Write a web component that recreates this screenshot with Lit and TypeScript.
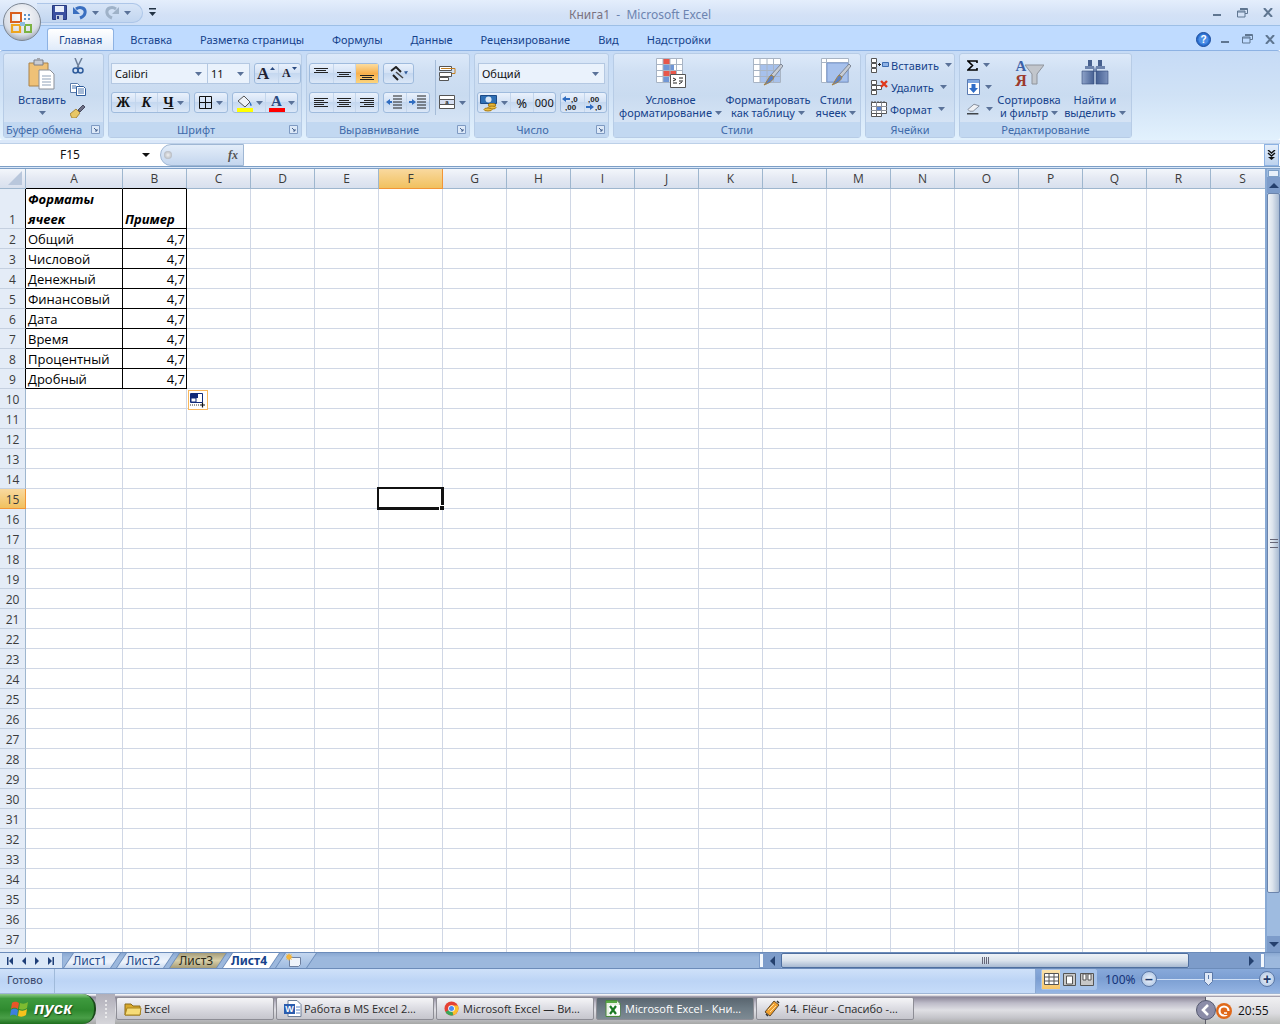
import { LitElement, html, css } from 'lit';
import { customElement } from 'lit/decorators.js';

const COLS = 'ABCDEFGHIJKLMNOPQRS'.split('');
const DATA: [string, string][] = [
  ['Общий', '4,7'],
  ['Числовой', '4,7'],
  ['Денежный', '4,7'],
  ['Финансовый', '4,7'],
  ['Дата', '4,7'],
  ['Время', '4,7'],
  ['Процентный', '4,7'],
  ['Дробный', '4,7'],
];

const caret = html`<svg class="caret" width="7" height="4" viewBox="0 0 7 4"><path d="M0 0h7L3.500 4z" fill="#5a7299"/></svg>`;
const launcher = html`<svg class="launcher" width="9" height="9" viewBox="0 0 9 9"><path d="M.5.500h8v8h-8z" fill="#dce8f7" stroke="#7f9ac2"/><path d="M3 3l3 3M6 4v2H4" fill="none" stroke="#46628f"/></svg>`;

// horizontal text-line glyphs for the alignment buttons
const lineIcon = (rows: [number, number, number][]) => html`<svg width="16" height="14" viewBox="0 0 16 14">
  <path d=${rows.map(([y, a, b]) => `M${a} ${y + 0.5}H${b}`).join('')} stroke="#222" fill="none"/>
</svg>`;

const icons = {
  office: html`<svg width="40" height="40" viewBox="0 0 40 40">
    <defs><radialGradient id="orb" cx=".5" cy=".35" r=".7"><stop offset="0" stop-color="#fff"/><stop offset=".7" stop-color="#d8dde6"/><stop offset="1" stop-color="#8f98a6"/></radialGradient></defs>
    <circle cx="20" cy="20" r="18.500" fill="url(#orb)" stroke="#7d8794"/>
    <path d="M9 11h10v9H9z" fill="none" stroke="#d9601f" stroke-width="2"/>
    <path d="M10 23h8v7h-8z" fill="none" stroke="#eda51f" stroke-width="2.200"/>
    <path d="M23 23h6v7h-6z" fill="none" stroke="#7cb342" stroke-width="2"/>
    <path d="M22 12h2v2h-2zM26 12h2v2h-2zM22 16h2v2h-2zM26 16h2v2h-2z" fill="#5b93c7"/>
    <path d="M18 20h5v4h-5z" fill="#8fbce0"/>
  </svg>`,
  save: html`<svg width="15" height="15" viewBox="0 0 15 15"><path d="M.5.500h14v14h-14z" fill="#3a50a0" stroke="#283a80"/><path d="M3 1h9v6H3z" fill="#e8eefa"/><path d="M4 10h7v5H4z" fill="#c3cde0"/><path d="M5 11h2v3H5z" fill="#2d3f85"/></svg>`,
  undo: html`<svg width="14" height="14" viewBox="0 0 14 14"><path d="M3 3c4-3 10-1 9 4-.4 2.600-2.500 4-5 5" fill="none" stroke="#3a6fc0" stroke-width="3"/><path d="M0 1v7h7z" fill="#3a6fc0"/></svg>`,
  redo: html`<svg width="14" height="14" viewBox="0 0 14 14"><path d="M11 3C7 0 1 2 2 7c.4 2.600 2.500 4 5 5" fill="none" stroke="#9fb2c8" stroke-width="3"/><path d="M14 1v7H7z" fill="#9fb2c8"/></svg>`,
  qat: html`<svg width="7" height="9" viewBox="0 0 7 9"><path d="M0 0h7v1.500H0z" fill="#234"/><path d="M0 4h7L3.500 8z" fill="#234"/></svg>`,
  paste: html`<svg width="28" height="32" viewBox="0 0 28 32">
    <path d="M1 5h19v23H1z" fill="#efc177" stroke="#a9824a"/><path d="M6 2h9v5H6z" fill="#c9ccd3" stroke="#7d7f87"/><path d="M9 0h3v3H9z" fill="#a2a6ae"/>
    <path d="M11 12h11l4 4v15H11z" fill="#fff" stroke="#8a8f98"/><path d="M14 18h9M14 21h9M14 24h9M14 27h9" stroke="#8fa1b8"/>
  </svg>`,
  cut: html`<svg width="12" height="16" viewBox="0 0 12 16"><path d="M3 0l4 10M10 0L5 10" stroke="#6d7f99" stroke-width="1.500" fill="none"/><circle cx="3.500" cy="12.500" r="2.500" fill="none" stroke="#2f5c9c" stroke-width="1.500"/><circle cx="8.500" cy="12.500" r="2.500" fill="none" stroke="#2f5c9c" stroke-width="1.500"/></svg>`,
  copy: html`<svg width="16" height="13" viewBox="0 0 16 13"><path d="M.5.500h7l2 2v7h-9z" fill="#fff" stroke="#5b7cab"/><path d="M6.500 3.500h7l2 2v7h-9z" fill="#fff" stroke="#2f5c9c"/><path d="M2 3h4M2 5h4M8 6h6M8 8h6M8 10h6" stroke="#4a76b0"/></svg>`,
  painter: html`<svg width="16" height="14" viewBox="0 0 16 14"><path d="M0 10l6-5 4 4-4 5H2z" fill="#e8c766" stroke="#a8893d"/><path d="M8 6l5-5 2 2-5 5z" fill="#6d6f85" stroke="#4a4c60"/></svg>`,
  borders: html`<svg width="14" height="14" viewBox="0 0 14 14"><path d="M.5.500h12v12H.500zM6.500.500v12M.500 6.500h12" fill="none" stroke="#111"/></svg>`,
  fill: html`<svg width="17" height="18" viewBox="0 0 17 18"><path d="M2 7l6-5 6 6-5 5z" fill="#eef2f8" stroke="#555"/><path d="M14 8c2 2 2 4 1 4s-1.500-2-1-4z" fill="#2f6cc0"/><path d="M1 14h16v4H1z" fill="#ff0"/></svg>`,
  fontColor: html`<svg width="17" height="18" viewBox="0 0 17 18"><text x="8.500" y="12" font-family="Liberation Serif" font-weight="700" font-size="15" text-anchor="middle" fill="#2a4a80">A</text><path d="M1 14h16v4H1z" fill="#f00"/></svg>`,
  orient: html`<svg width="19" height="15" viewBox="0 0 19 15"><path d="M2 5l5-4 5 5M4 9l5 5" fill="none" stroke="#222" stroke-width="2"/><path d="M7 6l7 6" stroke="#444" stroke-width="1.500"/><path d="M19 5l-4 .5 2 3z" fill="#2f5c9c"/></svg>`,
  wrap: html`<svg width="17" height="15" viewBox="0 0 17 15"><path d="M.5.500h12v4H.500zM.5 6.500h12v4H.500z" fill="#fff" stroke="#555"/><path d="M2 2.500h14v5h-3" fill="none" stroke="#c27f22"/><path d="M.5 11.500h9v3h-9z" fill="#fff" stroke="#555"/></svg>`,
  merge: html`<svg width="17" height="15" viewBox="0 0 17 15"><path d="M.5.500h15v13H.500z" fill="#fff" stroke="#555"/><path d="M.5 4.500h15v5H.500z" fill="#d5def0" stroke="#555"/><text x="8" y="9" font-size="6" font-family="Liberation Sans" font-weight="700" text-anchor="middle" fill="#222">a</text></svg>`,
  indentL: html`<svg width="17" height="15" viewBox="0 0 17 15"><path d="M7 1h9M7 4h9M7 7h9M7 10h9M7 13h9" stroke="#222"/><path d="M0 7l4-3v2h2v2H4v2z" fill="#2f6cc0"/></svg>`,
  indentR: html`<svg width="17" height="15" viewBox="0 0 17 15"><path d="M8 1h9M8 4h9M8 7h9M8 10h9M8 13h9" stroke="#222"/><path d="M7 7L3 4v2H0v2h3v2z" fill="#2f6cc0"/></svg>`,
  money: html`<svg width="18" height="18" viewBox="0 0 18 18"><path d="M.5 1.500h16v8H.500z" fill="#2f6fb5" stroke="#1c4a86"/><circle cx="8.500" cy="5.500" r="3" fill="#d8e6f6"/><ellipse cx="12" cy="11" rx="4" ry="1.500" fill="#f0c040" stroke="#a67a15"/><ellipse cx="12" cy="13.500" rx="4" ry="1.500" fill="#f0c040" stroke="#a67a15"/><ellipse cx="8" cy="15.500" rx="4" ry="1.500" fill="#f0c040" stroke="#a67a15"/></svg>`,
  decMore: html`<svg width="20" height="16" viewBox="0 0 20 16"><path d="M0 4l4-3v2h4v2H4v2z" fill="#2f6cc0"/><text x="9" y="7" font-size="8" font-family="Liberation Sans" font-weight="700" fill="#222">,0</text><text x="3" y="15" font-size="8" font-family="Liberation Sans" font-weight="700" fill="#222">,00</text></svg>`,
  decLess: html`<svg width="20" height="16" viewBox="0 0 20 16"><text x="3" y="7" font-size="8" font-family="Liberation Sans" font-weight="700" fill="#222">,00</text><path d="M9 12l-4-3v2H1v2h4v2z" fill="#2f6cc0"/><text x="10" y="15" font-size="8" font-family="Liberation Sans" font-weight="700" fill="#222">,0</text></svg>`,
  condFmt: html`<svg width="30" height="30" viewBox="0 0 30 30">
    <path d="M.5.500h26v24H.500z" fill="#fff" stroke="#a8b4c4"/>
    <path d="M7 1h7v5H7z" fill="#e8574a"/><path d="M7 7h11v5H7z" fill="#7097d6"/><path d="M7 13h13v5H7z" fill="#e8574a"/><path d="M7 19h6v5H7z" fill="#7097d6"/>
    <path d="M0 6.500h26M0 12.500h26M0 18.500h26M7 0v24M14 0v24M20.500 0v24" stroke="#a8b4c4"/>
    <path d="M14.500 16.500h15v13h-15z" fill="#fff" stroke="#555"/><path d="M17 20l3 1.500-3 1.500M17 25h4M23 20h4M23 23h4M23 26l3-2" fill="none" stroke="#222"/>
  </svg>`,
  tableFmt: html`<svg width="30" height="30" viewBox="0 0 30 30">
    <path d="M.5.500h27v24H.500z" fill="#fff" stroke="#a8b4c4"/><path d="M7 7h20v17H7z" fill="#a7c1ec"/>
    <path d="M0 6.500h27M0 12.500h27M0 18.500h27M7 0v24M14 0v24M20.500 0v24" stroke="#a8b4c4"/>
    <path d="M28 6l2 2-9 11-3-2z" fill="#c7ccd4" stroke="#7d8694"/><path d="M18 17l3 2c-1 4-5 6-10 8 3-3 4-7 7-10z" fill="#5b80c4" stroke="#a8823f"/>
  </svg>`,
  cellFmt: html`<svg width="30" height="30" viewBox="0 0 30 30">
    <path d="M.5.500h27v24H.500z" fill="#fff" stroke="#a8b4c4"/><path d="M0 4.500h27M5.500 0v24" stroke="#a8b4c4"/><path d="M6 5h21v19H6z" fill="#a7c1ec" stroke="#7d9ad0"/>
    <path d="M28 6l2 2-9 11-3-2z" fill="#c7ccd4" stroke="#7d8694"/><path d="M18 17l3 2c-1 4-5 6-10 8 3-3 4-7 7-10z" fill="#5b80c4" stroke="#a8823f"/>
  </svg>`,
  cellIns: html`<svg width="18" height="15" viewBox="0 0 18 15"><path d="M.5.500h5v4h-5zM.5 5.500h5v4h-5zM.5 10.500h5v4h-5z" fill="#fff" stroke="#555"/><path d="M11.500 4.500h6v4h-6z" fill="#8fb3e6" stroke="#3d6cb0"/><path d="M7 6.500h3M8.500 5v3" stroke="#222"/></svg>`,
  cellDel: html`<svg width="18" height="15" viewBox="0 0 18 15"><path d="M.5.500h5v4h-5zM.5 5.500h5v4h-5zM.5 10.500h5v4h-5zM5.500 5.500h5v4h-5z" fill="#fff" stroke="#555"/><path d="M10 1l6 6M16 1l-6 6" stroke="#e0391c" stroke-width="2.400"/></svg>`,
  cellFormat: html`<svg width="17" height="16" viewBox="0 0 17 16"><path d="M.5 1.500h15v11H.500z" fill="#fff" stroke="#555"/><path d="M0 5.500h16M0 9.500h16M5.500 1v12M10.500 1v12" stroke="#8a8f98"/><path d="M6 6h4v3H6z" fill="#5a86d6"/><path d="M1 0v2M4 0v2M7 0v2M10 0v2M13 0v2" stroke="#555"/><path d="M.5 12.500h5v3h-5zM5.500 12.500h5v3h-5z" fill="#fff" stroke="#555"/></svg>`,
  sigma: html`<svg width="11" height="11" viewBox="0 0 11 11"><path d="M10 3V1H1l4.500 4.500L1 10h9V8" fill="none" stroke="#000" stroke-width="1.600"/></svg>`,
  fillDown: html`<svg width="13" height="16" viewBox="0 0 13 16"><path d="M.5.500h12v15H.500z" fill="#fff" stroke="#5a7ab0"/><path d="M1 1h11v3H1z" fill="#7ea6e0"/><path d="M4.500 5h4v4H11l-4.500 5L2 9h2.500z" fill="#2e6cc8"/></svg>`,
  eraser: html`<svg width="14" height="12" viewBox="0 0 16 13"><path d="M1 7l7-6 6 2-7 6H3z" fill="#eef0f4" stroke="#7c8594"/><path d="M0 12h13" stroke="#111" stroke-width="1.300"/></svg>`,
  sort: html`<svg width="30" height="30" viewBox="0 0 30 30">
    <path d="M11 7h19l-7 9v10h-5V16z" fill="#c2c6cc" stroke="#8f949c"/>
    <text x="7" y="13" font-family="Liberation Serif" font-weight="700" font-size="15" text-anchor="middle" fill="#3d62a8">А</text>
    <text x="7" y="28" font-family="Liberation Serif" font-weight="700" font-size="16" text-anchor="middle" fill="#9c3a2e">Я</text>
  </svg>`,
  find: html`<svg width="28" height="30" viewBox="0 -1 28 30">
    <defs><linearGradient id="bin" x1="0" x2="1"><stop offset="0" stop-color="#8ea3c9"/><stop offset=".5" stop-color="#3f5a8e"/><stop offset="1" stop-color="#7d93bd"/></linearGradient></defs>
    <path d="M7 1h4v6H7zM17 1h4v6h-4z" fill="#46608f"/><path d="M4 7h9l1 4 1-4h9v3h-8v3h-4v-3H4z" fill="#6d84ad"/>
    <path d="M1 12h12v13H1zM15 12h12v13H15z" fill="url(#bin)" stroke="#334a78" stroke-width=".6"/>
  </svg>`,
  help: html`<svg width="15" height="15" viewBox="0 0 15 15"><circle cx="7.500" cy="7.500" r="7" fill="#2b6fd0" stroke="#1a4c9c"/><circle cx="7.500" cy="7.500" r="5" fill="#4c8fe6"/><text x="7.500" y="11" font-family="Liberation Sans" font-weight="700" font-size="10" text-anchor="middle" fill="#fff">?</text></svg>`,
  min: html`<svg width="9" height="9" viewBox="0 0 9 9"><path d="M0 6h8v2H0z" fill="#5f7691"/></svg>`,
  restore: html`<svg width="11" height="10" viewBox="0 0 11 10"><path d="M3 .5h7.500v5H8M.5 3h7.500v6H.5z" fill="none" stroke="#5f7691"/><path d="M3 1h7v1H3zM1 3.500h7v1H1z" fill="#5f7691"/></svg>`,
  close: html`<svg width="10" height="9" viewBox="0 0 10 9"><path d="M1 0l8 9M9 0L1 9" stroke="#5f7691" stroke-width="2"/></svg>`,
  fxExpand: html`<svg width="9" height="10" viewBox="0 0 9 10"><path d="M1 0l3.500 3L8 0M1 3l3.500 3L8 3" fill="none" stroke="#111" stroke-width="1.400"/><path d="M1 7h7L4.500 10z" fill="#111"/></svg>`,
  smart: html`<svg width="16" height="15" viewBox="0 0 16 15"><path d="M.5.500h12v9H.500z" fill="#fff" stroke="#112a78"/><path d="M1 1h7v4H1z" fill="#112a78"/><path d="M1 5h5v4H1z" fill="none" stroke="#112a78"/><path d="M0 12h10" stroke="#333" stroke-dasharray="1 1"/><path d="M10 12h5M12.500 9.500v5" stroke="#111" stroke-width="1.200"/></svg>`,
  flag: html`<svg width="20" height="19" viewBox="0 0 20 19"><path d="M2 3c3-2 5-1 7 0l-1 6C6 8 4 7 1 9z" fill="#e8552a"/><path d="M10 3c3 1 5 1 8-1l-1 6c-3 2-5 2-8 1z" fill="#7dbb30"/><path d="M1 10c3-2 5-1 7 0l-1 6c-2-1-4-2-7 0z" fill="#3d7fe0"/><path d="M9 10c3 1 5 1 8-1l-1 6c-3 2-5 2-8 1z" fill="#f6c21c"/></svg>`,
  folder: html`<svg width="18" height="15" viewBox="0 0 18 15"><path d="M1 3h6l2 2h7v9H1z" fill="#d9a92c" stroke="#8a6a18"/><path d="M1 14l2-7h14l-1 7z" fill="#f6dc78" stroke="#a8841f"/></svg>`,
  word: html`<svg width="18" height="17" viewBox="0 0 18 17"><path d="M4 .5h9l4 4v12H4z" fill="#fff" stroke="#6e7f98"/><path d="M0 4h11v10H0z" fill="#2a5cae"/><text x="5.500" y="12" font-family="Liberation Sans" font-weight="700" font-size="9" text-anchor="middle" fill="#fff">W</text><path d="M12 7h4M12 10h4M12 13h4" stroke="#5e86c6"/></svg>`,
  chrome: html`<svg width="17" height="15" viewBox="0 0 17 15"><circle cx="7.500" cy="7.500" r="7" fill="#e44134"/><path d="M7.500 7.500L1.500 11a7 7 0 0 0 6 3.500 7 7 0 0 0 2-.3z" fill="#3aa757"/><path d="M7.500 4.500h6.300a7 7 0 0 1-4.300 9.700L7.500 7.500z" fill="#fbc02d"/><circle cx="7.500" cy="7.500" r="3.300" fill="#fff"/><circle cx="7.500" cy="7.500" r="2.500" fill="#4b8bf5"/></svg>`,
  excel: html`<svg width="19" height="17" viewBox="0 0 19 17"><path d="M2 .5h11l3 3v13H2z" fill="#e8f0e4" stroke="#4a8a3c"/><path d="M2 1h11v2H2z" fill="#57a845"/><path d="M5 5h11v10H5z" fill="#fff"/><path d="M6 6l6 8M12 6l-6 8" stroke="#1c7a24" stroke-width="2.200"/></svg>`,
  winamp: html`<svg width="18" height="17" viewBox="0 0 18 17"><path d="M10 1l5 4L6 16l-5-4z" fill="#f0a030" stroke="#60482a"/><path d="M4 10l6-6M6 12l6-6" stroke="#fbe0a8"/><path d="M2 14l2 2M13 1l2 2" stroke="#333" stroke-width="1.500"/></svg>`,
  trayBack: html`<svg width="20" height="20" viewBox="0 0 20 20"><circle cx="10" cy="10" r="9.500" fill="#8b8ca8" stroke="#555a70"/><path d="M12 5l-5 5 5 5" fill="none" stroke="#fff" stroke-width="2.600"/></svg>`,
  trayApp: html`<svg width="16" height="16" viewBox="0 0 16 16"><circle cx="8" cy="8" r="8" fill="#e0691a"/><circle cx="8" cy="8" r="4.500" fill="none" stroke="#fff" stroke-width="2.200"/><path d="M8 8h6v4H8z" fill="#e0691a"/><path d="M8 10h3" stroke="#fff" stroke-width="1.500"/></svg>`,
  navFirst: html`<svg width="6" height="8" viewBox="0 0 6 8"><path d="M0 0h1.500v8H0zM6 0v8L2 4z" fill="#1f3f78"/></svg>`,
  navPrev: html`<svg width="4" height="8" viewBox="0 0 4 8"><path d="M4 0v8L0 4z" fill="#1f3f78"/></svg>`,
  navNext: html`<svg width="4" height="8" viewBox="0 0 4 8"><path d="M0 0v8l4-4z" fill="#1f3f78"/></svg>`,
  navLast: html`<svg width="6" height="8" viewBox="0 0 6 8"><path d="M0 0v8l4-4zM4.500 0H6v8H4.500z" fill="#1f3f78"/></svg>`,
  newSheet: html`<svg width="16" height="14" viewBox="0 0 16 14"><path d="M3.500 4.500h11v7l-2 2h-9z" fill="#eef3fa" stroke="#6e80a0"/><path d="M3 0l1 2 2-1-1 2 2 1-2 1 1 2-2-1-1 2-1-2-2 1 1-2-2-1 2-1-1-2 2 1z" fill="#f2b53c"/></svg>`,
  viewNormal: html`<svg width="15" height="12" viewBox="0 0 15 12"><path d="M.5.500h14v11H.500z" fill="#fff" stroke="#555"/><path d="M0 4h15M0 8h15M5 0v12M10 0v12" stroke="#555"/></svg>`,
  viewLayout: html`<svg width="13" height="13" viewBox="0 0 13 13"><path d="M.5.500h12v12H.500z" fill="#c8c8c8" stroke="#555"/><path d="M3.500 3h6v8h-6z" fill="#fff" stroke="#555"/></svg>`,
  viewBreak: html`<svg width="14" height="13" viewBox="0 0 14 13"><path d="M.5.500h13v12H.500z" fill="#c8c8c8" stroke="#555"/><path d="M3 1h3v6H3zM8 1h3v6H8z" fill="#fff" stroke="#555"/></svg>`,
  zoomThumb: html`<svg width="9" height="14" viewBox="0 0 9 14"><path d="M.5.500h8v9l-4 4-4-4z" fill="#dfe8f6" stroke="#5a78a8"/><path d="M4.500 3v4" stroke="#5a78a8"/></svg>`,
};

@customElement('app-root')
export class AppRoot extends LitElement {
  static styles = css`
    :host {
      display: block;
      width: 1280px;
      height: 1024px;
      overflow: hidden;
      font-family: 'Noto Sans', sans-serif;
      font-size: 11px;
      color: #15428b;
    }
    svg { display: block; flex: none; }
    .app { position: relative; display: flex; flex-direction: column; height: 1024px; }

    /* title bar */
    .titlebar {
      height: 26px;
      flex: none;
      display: flex;
      align-items: center;
      background: linear-gradient(#e4eefc, #d3e1f6 60%, #cfe0f7);
      border-bottom: 1px solid #9dbfe6;
      box-sizing: border-box;
    }
    .orb { position: absolute; left: 2px; top: 2px; z-index: 2; }
    .qat {
      margin-left: 37px;
      width: 106px;
      height: 20px;
      box-sizing: border-box;
      display: flex;
      align-items: center;
      padding-left: 15px;
      border: 1px solid #adc6e8;
      border-left: none;
      border-radius: 0 11px 11px 0;
      background: linear-gradient(#d8e5f7, #c2d6f0);
    }
    .qat .gap { width: 6px; }
    .qat .caret { margin-left: 5px; }
    .qat-more { margin-left: 6px; }
    .title { flex: 1; padding: 3px 0 0 413px; box-sizing: border-box; font-size: 12px; color: #6d84b0; white-space: pre; }
    .title span { color: #7a7280; }
    .winbtns { display: flex; align-items: center; gap: 15px; padding-right: 7px; }
    .winbtns.app-ctl { gap: 12px; padding-right: 5px; }
    .winbtns.app-ctl svg:first-child { margin-right: -2px; }

    /* tabs */
    .tabrow {
      height: 24px;
      flex: none;
      display: flex;
      align-items: flex-end;
      background: #bfdbff;
      padding-left: 47px;
      gap: 4px;
    }
    .tab {
      height: 22px;
      display: flex;
      align-items: center;
      padding: 0 12px;
      box-sizing: border-box;
      color: #15428b;
      white-space: nowrap;
    }
    .tab.on {
      padding: 0 11px;
      background: linear-gradient(#fff, #e0ebfa);
      border: 1px solid #8db2e3;
      border-bottom: none;
      border-radius: 3px 3px 0 0;
    }
    .tabrow .winbtns { margin-left: auto; height: 22px; }

    /* ribbon */
    .ribbon {
      height: 90px;
      flex: none;
      box-sizing: border-box;
      display: flex;
      gap: 4px;
      padding: 2px 3px 0;
      background: linear-gradient(#c6dbf6, #d0e2f6 50%, #e2f1fd);
      border-top: 1px solid #8db2e3;
      border-radius: 3px;
    }
    .group {
      height: 85px;
      box-sizing: border-box;
      border: 1px solid #b7cce6;
      border-radius: 3px;
      display: flex;
      flex-direction: column;
      background: linear-gradient(#dce9f9, #cfdff3 22%, #c9dbf0 50%, #dce8f7);
      flex: none;
    }
    .g-clip { width: 101px; }
    .g-font { width: 194px; }
    .g-align { width: 164px; }
    .g-num { width: 135px; }
    .g-style { width: 248px; }
    .g-cells { width: 90px; }
    .g-edit { width: 173px; }
    .body { height: 68px; box-sizing: border-box; display: flex; }
    .cap {
      height: 15px;
      box-sizing: border-box;
      background: #c2d8f1;
      display: flex;
      align-items: center;
      justify-content: center;
      color: #3e6aaa;
      position: relative;
      line-height: 15px;
      white-space: nowrap;
    }
    .cap.lp { padding-right: 18px; }
    .cap.left { justify-content: flex-start; padding-left: 2px; }
    .launcher { position: absolute; right: 3px; top: 3px; }

    .clip-big { width: 76px; display: flex; flex-direction: column; align-items: center; padding-top: 4px; box-sizing: border-box; flex: none; }
    .clip-big .label { margin-top: 3px; line-height: 14px; }
    .clip-big .caret { margin-top: 4px; }
    .clip-small { display: flex; flex-direction: column; align-items: center; justify-content: space-between; padding: 4px 0 2px; height: 66px; width: 20px; box-sizing: border-box; margin-left: -12px; }

    .rows { display: flex; flex-direction: column; gap: 8px; padding: 9px 0 0 2px; }
    .row { display: flex; gap: 4px; height: 21px; }
    .combo {
      box-sizing: border-box;
      height: 21px;
      display: flex;
      align-items: center;
      justify-content: space-between;
      padding: 0 5px 0 3px;
      background: #eaf2fc;
      border: 1px solid #b4c8e2;
      color: #111;
    }
    .c-font { width: 97px; }
    .c-size { width: 43px; margin-left: -5px; }
    .c-num { width: 127px; margin-left: 1px; }
    .btns {
      display: flex;
      align-items: stretch;
      height: 21px;
      box-sizing: border-box;
      border: 1px solid #9fbbdd;
      border-radius: 3px;
      background: linear-gradient(#e9f1fc, #d4e2f5 45%, #c5d8f0 50%, #dbe7f7);
    }
    .btns > div { display: flex; align-items: center; justify-content: center; gap: 3px; box-sizing: border-box; border-left: 1px solid #c4d6ec; color: #111; }
    .btns > div:first-child { border-left: none; }
    .btns .on { background: linear-gradient(#fbdc9e, #f8b04c 50%, #fcd57f); }
    .w22 { width: 22.500px; }
    .w30 { width: 29px; }
    .w33 { width: 32px; }
    .serif { font-family: 'Liberation Serif', serif; font-weight: 700; font-size: 14px; color: #111; }
    .serif.it { font-style: italic; }
    .serif.un { text-decoration: underline; }
    .btns > .grow-a { font-size: 17px; color: #223; gap: 1px; }
    .btns > .shrink-a { font-size: 12px; color: #223; gap: 1px; }
    .tri { align-self: flex-start; margin-top: 3px; }
    .sep { width: 1px; height: 55px; background: #a5bcd8; margin: 6px 0 0 5px; }
    .alignside { display: flex; flex-direction: column; gap: 14px; padding: 12px 0 0 3px; }
    .alignside > div { display: flex; align-items: center; gap: 3px; }
    .pct { font-size: 13px; }
    .thou { font-size: 11px; }

    .big { display: flex; flex-direction: column; align-items: center; padding-top: 4px; box-sizing: border-box; color: #15428b; flex: none; }
    .big .label { text-align: center; line-height: 13px; margin-top: 5px; white-space: nowrap; }
    .big .label .caret { display: inline-block; margin: 0 0 2px 3px; }
    .b-cond { width: 105px; margin-left: 4px; }
    .b-table { width: 90px; }
    .b-cell { width: 44px; margin-left: 1px; }
    .cellrows { display: flex; flex-direction: column; padding: 2px 0 0 5px; gap: 4px; }
    .cellrow { display: flex; align-items: center; gap: 2px; height: 18px; white-space: nowrap; }
    .cellrow .caret { margin-left: 4px; }
    .editcol { display: flex; flex-direction: column; padding: 2px 0 0 7px; gap: 4px; width: 32px; box-sizing: border-box; flex: none; }
    .editcol > div { display: flex; align-items: center; height: 18px; gap: 5px; }
    .b-sort { width: 70px; margin-left: 2px; }
    .b-find { width: 62px; }

    /* formula bar */
    .formula {
      height: 28px;
      flex: none;
      box-sizing: border-box;
      background: #dbe8f9;
      padding-top: 3px;
      position: relative;
    }
    .f-inner {
      height: 22px;
      display: flex;
      background: #fff;
      border-top: 1px solid #bcd0e8;
      border-bottom: 1px solid #7d9fc6;
    }
    .namebox {
      width: 157px;
      flex: none;
      box-sizing: border-box;
      display: flex;
      align-items: center;
      color: #111;
      padding: 0 7px 1px 60px;
      justify-content: space-between;
      font-size: 12px;
    }
    .namebox i { width: 0; height: 0; border: 4px solid transparent; border-top: 4px solid #111; border-bottom: none; }
    .pill {
      width: 84px;
      flex: none;
      box-sizing: border-box;
      margin-left: 3px;
      border-radius: 11px 0 0 11px;
      border: 1px solid #9fb7d4;
      background: linear-gradient(#e3edf9, #c4d6ee);
      display: flex;
      align-items: center;
      justify-content: space-between;
      padding: 0 5px 0 3px;
    }
    .pill b { width: 8px; height: 8px; border-radius: 50%; background: radial-gradient(#f0f0f0, #a0a6b0); }
    .pill span { font-family: 'Liberation Serif', serif; font-style: italic; font-weight: 700; font-size: 12px; color: #555; }
    .f-input { flex: 1; }
    .f-exp {
      width: 15px;
      flex: none;
      margin-right: 1px;
      box-sizing: border-box;
      border: 1px solid #8db2e3;
      background: linear-gradient(#e4eefb, #bcd2ee);
      display: flex;
      align-items: center;
      justify-content: center;
    }
    .sheetarea { height: 784px; flex: none; display: flex; border-top: 1px solid #7d9fc6; box-sizing: border-box; position: relative; }

    /* grid */
    .grid {
      width: 1265px;
      flex: none;
      overflow: hidden;
      display: grid;
      grid-template-columns: 26px 97px repeat(18, 64px);
      grid-template-rows: 20px 40px repeat(38, 20px);
      background: #fff;
      font-family: 'Open Sans', sans-serif;
      font-size: 13px;
      color: #000;
      line-height: 21px;
    }
    .cell {
      box-sizing: border-box;
      border-right: 1px solid #d0d7e5;
      border-bottom: 1px solid #d0d7e5;
      padding: 0 2px;
      white-space: nowrap;
      position: relative;
      display: flex;
      align-items: flex-start;
    }
    .cell.black { border-right-color: #000; border-bottom-color: #000; }
    .cell.hb { font-weight: 700; font-style: italic; }
    .cell.stack { display: block; line-height: 20px; }
    .cell.low, .hd.rh.low { padding-top: 20px; }
    .cell.num { justify-content: flex-end; padding-right: 1px; }
    .hd {
      box-sizing: border-box;
      display: flex;
      align-items: center;
      justify-content: center;
      color: #3b3b3b;
      background: linear-gradient(#f3f6fb, #e4e9f3 50%, #d8e0ee);
      border-right: 1px solid #9eb6ce;
      border-bottom: 1px solid #9eb6ce;
      font-size: 12px;
    }
    .hd.rh { align-items: flex-start; background: #e4ecf7; border-bottom-color: #c5d0e0; }
    .hd.sel, .hd.rh.sel { background: linear-gradient(#f9d99f, #f1c15f); border-color: #f29536; }
    .hd.blackr { border-right-color: #000; }
    .hd.blackb { border-bottom-color: #000; }
    .corner { position: relative; }
    .corner::after { content: ''; position: absolute; right: 3px; bottom: 3px; border: 7px solid transparent; border-right-color: #b9c7dc; border-bottom-color: #b9c7dc; }
    .cursor { position: absolute; left: -2px; top: -2px; right: -2px; bottom: -2px; border: 2px solid #111; border-width: 2px 3px 3px 2px; z-index: 1; }
    .cursor::after { content: ''; position: absolute; right: -3px; bottom: -3px; width: 5px; height: 5px; background: #111; border: 1px solid #fff; border-width: 1px 0 0 1px; box-sizing: border-box; }
    .smart { position: absolute; left: 1px; top: 1px; width: 20px; height: 20px; box-sizing: border-box; border: 1px solid #f9b85c; background: #fff; display: flex; align-items: center; justify-content: center; z-index: 1; }

    /* vertical scrollbar */
    .vbar { flex: 1; display: flex; flex-direction: column; align-items: stretch; background: #9ebbe0; border-left: 2px solid #88a9d4; box-sizing: border-box; }
    .vsplit { height: 7px; margin: 1px 1px 0; background: #e8f0fa; border: 1px solid #7d9fc6; box-sizing: border-box; }
    .varrow { height: 16px; display: flex; align-items: center; justify-content: center; background: #7d9cca; }
    .varrow i { width: 0; height: 0; border: 5px solid transparent; border-bottom: 5px solid #24406e; border-top: none; }
    .varrow.dn i { border-bottom: none; border-top: 5px solid #24406e; }
    .vthumb { height: 700px; flex: none; background: linear-gradient(90deg, #eef2f7, #dde4ed 40%, #a8bad2); border: 1px solid #6b84ac; border-radius: 2px; box-sizing: border-box; display: flex; align-items: center; justify-content: center; }
    .vthumb i { width: 8px; height: 7px; border-top: 1px solid #667; border-bottom: 1px solid #667; position: relative; }
    .vthumb i::after { content: ''; position: absolute; left: 0; right: 0; top: 2px; height: 1px; background: #667; }
    .vfill { flex: 1; }

    /* sheet tabs */
    .sheets {
      height: 17px;
      flex: none;
      display: flex;
      align-items: stretch;
      background: linear-gradient(#8aa8d2, #9cb8dd 30%, #9cb8dd);
      border-top: 1px solid #6c8cba;
      border-bottom: 1px solid #6c8cba;
      box-sizing: border-box;
    }
    .nav { width: 63px; flex: none; background: #dbe8f8; display: flex; align-items: center; gap: 9px; padding-left: 7px; box-sizing: border-box; border-right: 1px solid #8aa8d2; }
    .stab {
      width: 58px;
      margin-right: -5px;
      padding: 0 4px 1px 0;
      flex: none;
      box-sizing: border-box;
      position: relative;
      display: flex;
      align-items: center;
      justify-content: center;
      color: #234a8a;
      background: #6c8cba;
      clip-path: polygon(10px 0, 100% 0, calc(100% - 10px) 100%, 0 100%);
      font-size: 12px;
    }
    .stab::before {
      content: '';
      position: absolute;
      inset: 0 1px 0 1px;
      clip-path: polygon(10px 0, 100% 0, calc(100% - 10px) 100%, 0 100%);
      background: linear-gradient(#d8e5f7, #eef4fc 60%, #c8d9f0);
    }
    .stab span { position: relative; }
    .stab.colored::before { background: linear-gradient(#a59c78, #d8cfa8 50%, #a89e78); }
    .stab.colored { color: #2a2a1a; }
    .stab.on { font-weight: 700; color: #15428b; z-index: 1; }
    .stab.on::before { background: #fff; }
    .stab.add { width: 42px; }
    .stab.add::before { background: linear-gradient(#c3d6ef, #9fbbe0); }
    .sheetspace { flex: 1; }
    .hsplit { width: 5px; flex: none; background: #f4f8fd; border: 1px solid #7d9cca; box-sizing: border-box; }
    .harrow { width: 17px; flex: none; background: #7d9cca; display: flex; align-items: center; justify-content: center; }
    .harrow i { width: 0; height: 0; border: 5px solid transparent; border-right: 5px solid #24406e; border-left: none; }
    .harrow.r i { border-right: none; border-left: 5px solid #24406e; }
    .hthumb { width: 408px; flex: none; background: linear-gradient(#eef2f7, #dbe3ec 50%, #a8bad2); border: 1px solid #4f6f9f; border-radius: 2px; box-sizing: border-box; display: flex; align-items: center; justify-content: center; }
    .hthumb i { width: 7px; height: 7px; background: repeating-linear-gradient(90deg, #667 0 1px, transparent 1px 2px); }
    .hfill { width: 54px; flex: none; background: #7d9cca; }
    .hend { width: 15px; flex: none; }

    /* status bar */
    .status {
      height: 25px;
      flex: none;
      box-sizing: border-box;
      display: flex;
      align-items: stretch;
      background: linear-gradient(#cfe1f9, #bcd4f5 50%, #c6dcf9);
      border-bottom: 1px solid #9fb6d6;
      color: #39466a;
    }
    .ready { width: 55px; flex: none; display: flex; align-items: center; padding: 0 0 4px 7px; box-sizing: border-box; border-right: 1px solid #a0bada; }
    .status-fill { width: 980px; flex: none; border-right: 1px solid #8aa8d2; }
    .status-right { flex: 1; display: flex; align-items: center; padding-bottom: 4px; background: linear-gradient(#88a9da, #7b9ed2 40%, #95b5e3); color: #15347a; font-size: 12px; }
    .views { margin-left: 5px; display: flex; height: 19px; border: 1px solid #a9c3e8; border-radius: 2px; background: #a8c4ea; }
    .views div { width: 18px; display: flex; align-items: center; justify-content: center; }
    .views .on { background: linear-gradient(#fbe3ae, #f8c76a); }
    .zoomtxt { margin-left: 8px; width: 36px; }
    .zbtn { width: 16px; height: 16px; flex: none; border-radius: 50%; border: 1px solid #5c79a8; background: radial-gradient(#eef4fc, #a4bddf); display: flex; align-items: center; justify-content: center; box-sizing: border-box; color: #1f3a6a; font-weight: 700; font-size: 14px; line-height: 1; font-family: 'Liberation Sans', sans-serif; }
    .ztrack { width: 102px; height: 1px; flex: none; background: #cfdff5; position: relative; }
    .ztrack svg { position: absolute; left: 47px; top: -7px; }

    /* taskbar */
    .taskbar {
      flex: 1;
      display: flex;
      background: linear-gradient(#f4f4f6 0, #f4f4f6 1px, #8b8698 3px, #bdbbc8 9px, #dfdfe4 16px, #c3c3c9 24px, #a6a8a6 100%);
      position: relative;
    }
    .start {
      width: 96px;
      flex: none;
      display: flex;
      align-items: center;
      gap: 4px;
      padding-left: 10px;
      box-sizing: border-box;
      background: linear-gradient(#8fcb8a, #3e9a3e 15%, #2f8a2f 55%, #4a9f48 80%, #1e6e1e);
      border-radius: 0 14px 14px 0;
      border-right: 2px solid #1a4a1a;
      color: #fff;
      font-family: 'Liberation Sans', sans-serif;
      font-style: italic;
      font-weight: 700;
      font-size: 17px;
      text-shadow: 1px 1px 1px #1a4a1a;
    }
    .grip { width: 19px; flex: none; display: flex; flex-direction: column; align-items: center; justify-content: center; gap: 2px; background: linear-gradient(#b0aeb9, #d6d6da); }
    .grip i { width: 2px; height: 2px; background: #f4f4f4; border-radius: 50%; }
    .tasks { display: flex; gap: 2px; padding: 3px 0 4px; margin-left: 1px; }
    .task {
      width: 158px;
      box-sizing: border-box;
      display: flex;
      align-items: center;
      gap: 2px;
      padding-left: 7px;
      background: linear-gradient(#f5f5f7, #e6e6eb 30%, #d2d2d9 70%, #c6c6cd);
      border: 1px solid #8d8d95;
      border-radius: 2px;
      color: #2a2a2a;
      white-space: nowrap;
      font-size: 11px;
      font-family: 'Open Sans', sans-serif;
    }
    .task.on { background: linear-gradient(#59656f, #6d7b85 50%, #7d8a93); color: #fff; }
    .tray {
      margin-left: auto;
      width: 75px;
      box-sizing: border-box;
      display: flex;
      align-items: center;
      border-left: 1px solid #5d5d68;
      margin-top: 3px;
      background: linear-gradient(#f0f0f2, #dcdce0 60%, #b9bbb9);
      color: #111;
      position: relative;
      padding-left: 10px;
      gap: 6px;
      font-size: 12px;
      font-family: 'Open Sans', sans-serif;
    }
    .tray .back { position: absolute; left: -10px; top: 3px; }
  `;

  private renderTitle() {
    return html`<div class="titlebar">
      <div class="orb">${icons.office}</div>
      <div class="qat">
        ${icons.save}<span class="gap"></span>${icons.undo}${caret}<span class="gap"></span>${icons.redo}${caret}
      </div>
      <div class="qat-more">${icons.qat}</div>
      <div class="title"><span>Книга1</span>  -  Microsoft Excel</div>
      <div class="winbtns">${icons.min}${icons.restore}${icons.close}</div>
    </div>`;
  }

  private renderTabs() {
    const tabs = ['Главная', 'Вставка', 'Разметка страницы', 'Формулы', 'Данные', 'Рецензирование', 'Вид', 'Надстройки'];
    return html`<div class="tabrow">
      ${tabs.map((t, i) => html`<div class="tab ${i === 0 ? 'on' : ''}">${t}</div>`)}
      <div class="winbtns app-ctl">${icons.help}${icons.min}${icons.restore}${icons.close}</div>
    </div>`;
  }

  private renderRibbon() {
    const triUp = html`<svg class="tri" width="5" height="3" viewBox="0 0 5 3"><path d="M0 3h5L2.500 0z" fill="#2a4a80"/></svg>`;
    const triDn = html`<svg class="tri" width="5" height="3" viewBox="0 0 5 3"><path d="M0 0h5L2.500 3z" fill="#2a4a80"/></svg>`;
    return html`<div class="ribbon">
      <div class="group g-clip">
        <div class="body">
          <div class="clip-big">${icons.paste}<div class="label">Вставить</div>${caret}</div>
          <div class="clip-small">${icons.cut}${icons.copy}${icons.painter}</div>
        </div>
        <div class="cap left">Буфер обмена${launcher}</div>
      </div>

      <div class="group g-font">
        <div class="body"><div class="rows">
          <div class="row">
            <div class="combo c-font">Calibri${caret}</div>
            <div class="combo c-size">11${caret}</div>
            <div class="btns">
              <div class="w22 serif grow-a">A${triUp}</div>
              <div class="w22 serif shrink-a">A${triDn}</div>
            </div>
          </div>
          <div class="row">
            <div class="btns">
              <div class="w22 serif">Ж</div>
              <div class="w22 serif it">К</div>
              <div class="w33 serif"><span class="serif un">Ч</span>${caret}</div>
            </div>
            <div class="btns"><div class="w33">${icons.borders}${caret}</div></div>
            <div class="btns">
              <div class="w33">${icons.fill}${caret}</div>
              <div class="w33">${icons.fontColor}${caret}</div>
            </div>
          </div>
        </div></div>
        <div class="cap lp">Шрифт${launcher}</div>
      </div>

      <div class="group g-align">
        <div class="body">
          <div class="rows">
            <div class="row">
              <div class="btns">
                <div class="w22">${lineIcon([[1, 1, 15], [3, 3, 13], [5, 1, 15]])}</div>
                <div class="w22">${lineIcon([[5, 1, 15], [7, 3, 13], [9, 1, 15]])}</div>
                <div class="w22 on">${lineIcon([[8, 1, 15], [10, 3, 13], [12, 1, 15]])}</div>
              </div>
              <div class="btns"><div class="w30">${icons.orient}</div></div>
            </div>
            <div class="row">
              <div class="btns">
                <div class="w22">${lineIcon([[2, 1, 15], [4, 1, 11], [6, 1, 15], [8, 1, 11], [10, 1, 15]])}</div>
                <div class="w22">${lineIcon([[2, 1, 15], [4, 3, 13], [6, 1, 15], [8, 3, 13], [10, 1, 15]])}</div>
                <div class="w22">${lineIcon([[2, 1, 15], [4, 5, 15], [6, 1, 15], [8, 5, 15], [10, 1, 15]])}</div>
              </div>
              <div class="btns">
                <div class="w22">${icons.indentL}</div>
                <div class="w22">${icons.indentR}</div>
              </div>
            </div>
          </div>
          <div class="sep"></div>
          <div class="alignside">
            <div>${icons.wrap}</div>
            <div>${icons.merge}${caret}</div>
          </div>
        </div>
        <div class="cap lp">Выравнивание${launcher}</div>
      </div>

      <div class="group g-num">
        <div class="body"><div class="rows">
          <div class="row"><div class="combo c-num">Общий${caret}</div></div>
          <div class="row">
            <div class="btns">
              <div class="w33">${icons.money}${caret}</div>
              <div class="w22 pct">%</div>
              <div class="w22 thou">000</div>
            </div>
            <div class="btns">
              <div class="w22">${icons.decMore}</div>
              <div class="w22">${icons.decLess}</div>
            </div>
          </div>
        </div></div>
        <div class="cap lp">Число${launcher}</div>
      </div>

      <div class="group g-style">
        <div class="body">
          <div class="big b-cond">${icons.condFmt}<div class="label">Условное<br />форматирование${caret}</div></div>
          <div class="big b-table">${icons.tableFmt}<div class="label">Форматировать<br />как таблицу${caret}</div></div>
          <div class="big b-cell">${icons.cellFmt}<div class="label">Стили<br />ячеек${caret}</div></div>
        </div>
        <div class="cap">Стили</div>
      </div>

      <div class="group g-cells">
        <div class="body"><div class="cellrows">
          <div class="cellrow">${icons.cellIns}Вставить${caret}</div>
          <div class="cellrow">${icons.cellDel}Удалить${caret}</div>
          <div class="cellrow">${icons.cellFormat}Формат${caret}</div>
        </div></div>
        <div class="cap">Ячейки</div>
      </div>

      <div class="group g-edit">
        <div class="body">
          <div class="editcol">
            <div>${icons.sigma}${caret}</div>
            <div>${icons.fillDown}${caret}</div>
            <div>${icons.eraser}${caret}</div>
          </div>
          <div class="big b-sort">${icons.sort}<div class="label">Сортировка<br />и фильтр${caret}</div></div>
          <div class="big b-find">${icons.find}<div class="label">Найти и<br />выделить${caret}</div></div>
        </div>
        <div class="cap">Редактирование</div>
      </div>
    </div>`;
  }

  private renderFormula() {
    return html`<div class="formula">
      <div class="f-inner">
        <div class="namebox">F15<i></i></div>
        <div class="pill"><b></b><span>fx</span></div>
        <div class="f-input"></div>
        <div class="f-exp">${icons.fxExpand}</div>
      </div>
    </div>`;
  }

  private renderGrid() {
    const cells = [];
    // column headers
    cells.push(html`<div class="hd corner"></div>`);
    COLS.forEach((c, i) => {
      const cls = `hd ${c === 'F' ? 'sel' : ''} ${i < 2 ? 'blackb' : ''}`;
      cells.push(html`<div class=${cls}>${c}</div>`);
    });
    // row 38 only shows its top few pixels, so its number stays out
    for (let r = 1; r <= 38; r++) {
      const inTable = r <= 9;
      cells.push(html`<div class="hd rh ${r === 1 ? 'low' : ''} ${r === 15 ? 'sel' : ''} ${inTable ? 'blackr' : ''}">${r < 38 ? r : ''}</div>`);
      COLS.forEach((c, i) => {
        cells.push(this.renderCell(r, c, i));
      });
    }
    return html`<div class="grid">${cells}</div>`;
  }

  private renderCell(r: number, c: string, i: number) {
    if (i < 2 && r <= 9) {
      if (r === 1) {
        return i === 0
          ? html`<div class="cell black hb stack">Форматы<br />ячеек</div>`
          : html`<div class="cell black hb low">Пример</div>`;
      }
      const row = DATA[r - 2];
      return i === 0
        ? html`<div class="cell black">${row[0]}</div>`
        : html`<div class="cell black num">${row[1]}</div>`;
    }
    if (c === 'F' && r === 15) {
      return html`<div class="cell"><div class="cursor"></div></div>`;
    }
    if (c === 'C' && r === 10) {
      return html`<div class="cell"><div class="smart">${icons.smart}</div></div>`;
    }
    return html`<div class="cell"></div>`;
  }

  private renderVbar() {
    return html`<div class="vbar">
      <div class="vsplit"></div>
      <div class="varrow"><i></i></div>
      <div class="vthumb"><i></i></div>
      <div class="vfill"></div>
      <div class="varrow dn"><i></i></div>
    </div>`;
  }

  private renderSheets() {
    return html`<div class="sheets">
      <div class="nav">${icons.navFirst}${icons.navPrev}${icons.navNext}${icons.navLast}</div>
      <div class="stab"><span>Лист1</span></div>
      <div class="stab"><span>Лист2</span></div>
      <div class="stab colored"><span>Лист3</span></div>
      <div class="stab on"><span>Лист4</span></div>
      <div class="stab add"><span>${icons.newSheet}</span></div>
      <div class="sheetspace"></div>
      <div class="hsplit"></div>
      <div class="harrow"><i></i></div>
      <div class="hthumb"><i></i></div>
      <div class="hfill"></div>
      <div class="harrow r"><i></i></div>
      <div class="hsplit"></div>
      <div class="hend"></div>
    </div>`;
  }

  private renderStatus() {
    return html`<div class="status">
      <div class="ready">Готово</div>
      <div class="status-fill"></div>
      <div class="status-right">
        <div class="views">
          <div class="on">${icons.viewNormal}</div>
          <div>${icons.viewLayout}</div>
          <div>${icons.viewBreak}</div>
        </div>
        <div class="zoomtxt">100%</div>
        <div class="zbtn">–</div>
        <div class="ztrack">${icons.zoomThumb}</div>
        <div class="zbtn">+</div>
      </div>
    </div>`;
  }

  private renderTaskbar() {
    const tasks = [
      { icon: icons.folder, label: 'Excel' },
      { icon: icons.word, label: 'Работа в MS Excel 2…' },
      { icon: icons.chrome, label: 'Microsoft Excel — Ви…' },
      { icon: icons.excel, label: 'Microsoft Excel - Кни…', on: true },
      { icon: icons.winamp, label: '14. Flëur - Спасибо -…' },
    ];
    return html`<div class="taskbar">
      <div class="start">${icons.flag}пуск</div>
      <div class="grip"><i></i><i></i><i></i><i></i><i></i></div>
      <div class="tasks">
        ${tasks.map((t) => html`<div class="task ${t.on ? 'on' : ''}">${t.icon}${t.label}</div>`)}
      </div>
      <div class="tray">
        <div class="back">${icons.trayBack}</div>
        ${icons.trayApp}
        <span>20:55</span>
      </div>
    </div>`;
  }

  render() {
    return html`<div class="app">
      ${this.renderTitle()}
      ${this.renderTabs()}
      ${this.renderRibbon()}
      ${this.renderFormula()}
      <div class="sheetarea">${this.renderGrid()}${this.renderVbar()}</div>
      ${this.renderSheets()}
      ${this.renderStatus()}
      ${this.renderTaskbar()}
    </div>`;
  }
}
